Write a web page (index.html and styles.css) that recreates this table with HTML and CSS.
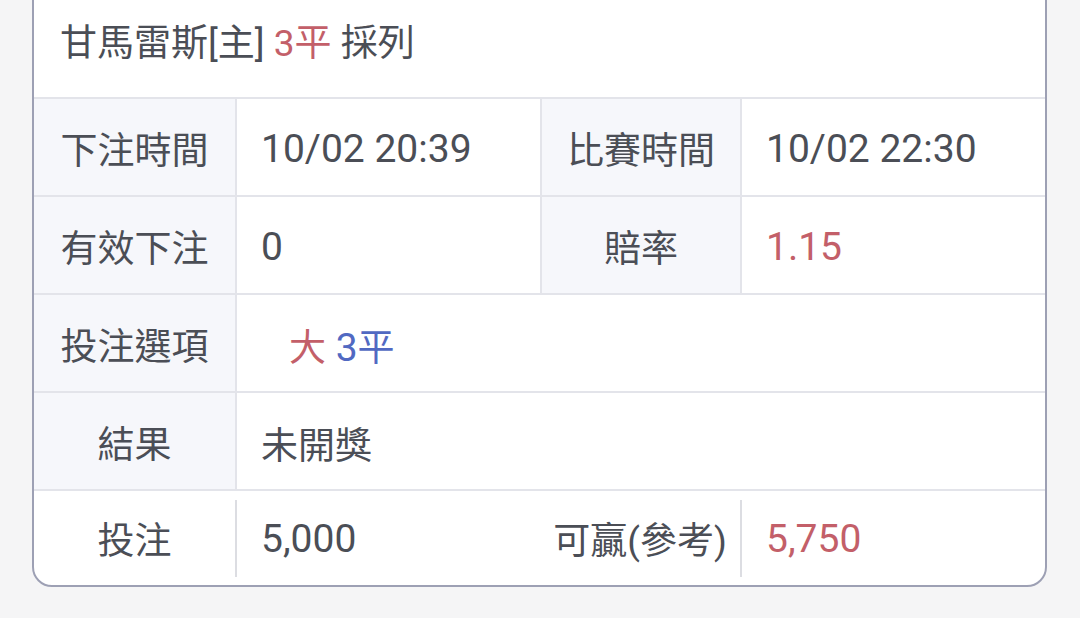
FILE: index.html
```html
<!DOCTYPE html>
<html lang="zh-Hant">
<head>
<meta charset="utf-8">
<title>注單</title>
<link rel="stylesheet" href="styles.css">
</head>
<body>
<div class="card">
  <div class="header">甘馬雷斯[主] <span class="red">3平</span> 採列</div>
  <div class="grid">
    <div class="lbl">下注時間</div>
    <div class="val">10/02 20:39</div>
    <div class="lbl">比賽時間</div>
    <div class="val">10/02 22:30</div>

    <div class="lbl">有效下注</div>
    <div class="val">0</div>
    <div class="lbl">賠率</div>
    <div class="val red">1.15</div>

    <div class="lbl">投注選項</div>
    <div class="val span3"><span class="pick"><span class="cjk red">大</span> <span class="blue">3<span class="cjk">平</span></span></span></div>

    <div class="lbl">結果</div>
    <div class="val span3"><span class="cjk">未開獎</span></div>
  </div>
  <div class="foot">
    <div class="flbl">投注</div>
    <div class="fval sep">5,000</div>
    <div class="flbl">可贏(參考)</div>
    <div class="fval sep red">5,750</div>
  </div>
</div>
</body>
</html>
```

FILE: styles.css
```css
html, body {
  margin: 0;
  padding: 0;
  background: #f5f5f6;
  height: 618px;
  overflow: hidden;
}

body {
  font-family: Roboto, "Noto Sans CJK TC", sans-serif;
  color: #4b4e56;
}

.card {
  margin: -20px 0 0 32px;
  width: 1011px;
  background: #ffffff;
  border: 2px solid #9da0b4;
  border-radius: 20px;
  overflow: hidden;
}

.header {
  height: 115px;
  box-sizing: border-box;
  padding: 0 0 0 26px;
  display: flex;
  align-items: center;
  font-size: 37px;
  white-space: pre;
}

.red { color: #c35f69; }
.blue { color: #5169c2; }

.grid {
  display: grid;
  grid-template-columns: 201px 303px 198px 1fr;
  grid-auto-rows: 96px;
  gap: 2px;
  background: #e3e4ea;
  border-top: 2px solid #e3e4ea;
  border-bottom: 2px solid #e3e4ea;
}

.lbl {
  background: #f6f7fb;
  display: flex;
  align-items: center;
  justify-content: center;
  padding-top: 2px;
  font-size: 37px;
  font-family: "Noto Sans CJK TC", sans-serif;
}

.val {
  background: #ffffff;
  display: flex;
  align-items: center;
  padding-left: 24px;
  padding-top: 4px;
  font-size: 39px;
  white-space: pre;
}

.span3 { grid-column: span 3; }

.cjk {
  font-size: 37px;
  font-family: "Noto Sans CJK TC", sans-serif;
}

.pick { margin-left: 28px; }

.foot {
  display: grid;
  grid-template-columns: 201px 305px 200px 1fr;
  height: 94px;
  align-items: center;
}

.flbl {
  display: flex;
  justify-content: center;
  align-items: center;
  height: 77px;
  font-size: 37px;
  font-family: Roboto, "Noto Sans CJK TC", sans-serif;
}

.fval {
  display: flex;
  align-items: center;
  height: 77px;
  padding-left: 24px;
  padding-top: 2px;
  box-sizing: border-box;
  font-size: 39px;
}

.sep { border-left: 2px solid #dcdde2; }
```
